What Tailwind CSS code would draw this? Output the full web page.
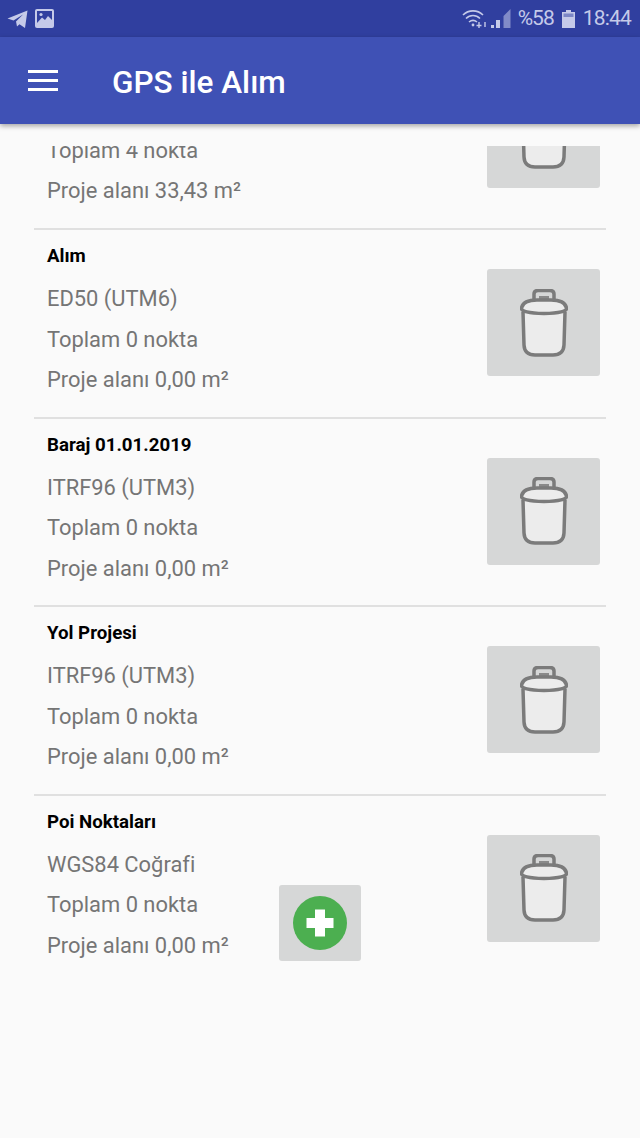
<!DOCTYPE html>
<html lang="tr">
<head>
  <meta charset="UTF-8" />
  <meta name="viewport" content="width=device-width, initial-scale=1.0"/>
  <title>GPS ile Alım</title>
  <script src="https://cdn.jsdelivr.net/npm/@tailwindcss/browser@4"></script>
</head>

<body class="bg-[#fafafa] font-['Roboto',sans-serif]">
<div class="relative w-[640px] h-[1138px] overflow-hidden bg-[#fafafa]">

  <!-- status bar -->
  <div class="h-[37px] bg-[#303f9f] flex items-center pl-[7px] pr-[9px] text-[#c5cae9]">
    <svg class="w-[21px] h-[20px]" viewBox="0 0 21 20" fill="currentColor"><path d="M0.5 9.5 L20.5 1.5 L18 19 L12.5 15.2 L10 17.5 L9 12.5 L16 5.5 L6.5 11.5 Z"/></svg>
    <svg class="w-[19px] h-[19px] ml-[7px]" viewBox="0 0 19 19"><rect width="19" height="19" rx="2" fill="currentColor"/><rect x="2" y="2" width="15" height="12" fill="#303f9f"/><circle cx="6" cy="5.5" r="1.6" fill="currentColor"/><path d="M2 14 L7 8.5 L10 11 L13 7 L17 11 V14 Z" fill="currentColor"/></svg>
    <div class="ml-auto flex items-center">
      <svg class="w-[25px] h-[20px]" viewBox="0 0 25 20" fill="none" stroke="currentColor" stroke-width="1.6"><path d="M1 6 C6.5 0.5 15.5 0.5 21 6"/><path d="M4 9.5 C8 5.5 14 5.5 18 9.5"/><path d="M7 13 C9.5 11 12.5 11 15 13"/><circle cx="11" cy="16" r="1.4" fill="currentColor" stroke="none"/><path d="M17 13 V19 M14.5 16.5 H19.5 M23 13 V18" stroke-width="1.4"/></svg>
      <svg class="w-[20px] h-[19px] ml-[4px]" viewBox="0 0 20 19" fill="currentColor"><path d="M0 16 H3 V19 H0 Z"/><path d="M5 11 H9 V19 H5 Z"/><path d="M12.5 7 L19.5 0 V19 H12.5 Z" fill-opacity="0.55"/></svg>
      <span class="ml-[7px] text-[21px] leading-none tracking-[-1px]">%58</span>
      <svg class="w-[13px] h-[18px] ml-[8px]" viewBox="0 0 13 18" fill="currentColor"><path d="M4 0 H9 V2 H13 V18 H0 V2 H4 Z"/><rect x="1.5" y="3.5" width="10" height="3.5" fill="#7c87c6"/></svg>
      <span class="ml-[8px] text-[21px] leading-none tracking-[-0.8px]">18:44</span>
    </div>
  </div>

  <!-- app bar -->
  <header class="h-[87px] bg-[#3f51b5] flex items-center shadow-[0_2px_5px_rgba(0,0,0,0.35)] relative z-10">
    <div class="ml-[28px] w-[30px] flex flex-col gap-[6px]">
      <div class="h-[3px] bg-white"></div>
      <div class="h-[3px] bg-white"></div>
      <div class="h-[3px] bg-white"></div>
    </div>
    <h1 class="ml-[54px] pt-[4px] text-[31.5px] font-medium text-white whitespace-nowrap">GPS ile Alım</h1>
  </header>

  <!-- project list, scrolled so that the first row is cut off -->
  <main class="mt-[22px] mx-[34px] h-[992px] overflow-hidden">

    <section class="h-[84px] border-b-2 border-[#e0e0e0] flex justify-between">
      <div class="pl-[13px] -mt-[15.5px]">
        <p class="text-[21.9px] leading-[40.5px] text-[#757575]">Toplam 4 nokta</p>
        <p class="text-[21.9px] leading-[40.5px] text-[#757575]">Proje alanı 33,43 m²</p>
      </div>
      <button class="-mt-[65px] mr-[6px] w-[113px] h-[107px] rounded-[3px] bg-[#d6d7d7] flex items-center justify-center">
        <svg class="w-[48px] h-[68px]" viewBox="0 0 48 68" fill="none" stroke="#7b7b7b" stroke-width="3.5"><path d="M14 12 V5 Q14 1.5 18 1.5 H30 Q34 1.5 34 5 V12" fill="#d6d7d7"/><path d="M19 9 H29" stroke-width="4" stroke="#8a8a8a"/><path d="M3 23 L4 56 Q4.500 66 15 66 H33 Q43.500 66 44 56 L45 23" fill="#ececec"/><path d="M1.5 19 Q3 11 17 11 H31 Q45 11 46.5 19 Q47 24 24 24.5 Q1 24 1.5 19 Z" fill="#ececec"/></svg>
      </button>
    </section>

    <section class="h-[188.5px] border-b-2 border-[#e0e0e0] flex justify-between">
      <div class="pl-[13px] pt-[13px]">
        <h2 class="text-[18.7px] leading-[26px] font-bold text-black">Alım</h2>
        <p class="mt-[10px] text-[21.9px] leading-[40.5px] text-[#757575]">ED50 (UTM6)</p>
        <p class="text-[21.9px] leading-[40.5px] text-[#757575]">Toplam 0 nokta</p>
        <p class="text-[21.9px] leading-[40.5px] text-[#757575]">Proje alanı 0,00 m²</p>
      </div>
      <button class="mt-[39px] mr-[6px] w-[113px] h-[107px] rounded-[3px] bg-[#d6d7d7] flex items-center justify-center">
        <svg class="w-[48px] h-[68px]" viewBox="0 0 48 68" fill="none" stroke="#7b7b7b" stroke-width="3.5"><path d="M14 12 V5 Q14 1.5 18 1.5 H30 Q34 1.5 34 5 V12" fill="#d6d7d7"/><path d="M19 9 H29" stroke-width="4" stroke="#8a8a8a"/><path d="M3 23 L4 56 Q4.500 66 15 66 H33 Q43.500 66 44 56 L45 23" fill="#ececec"/><path d="M1.5 19 Q3 11 17 11 H31 Q45 11 46.5 19 Q47 24 24 24.5 Q1 24 1.5 19 Z" fill="#ececec"/></svg>
      </button>
    </section>

    <section class="h-[188.5px] border-b-2 border-[#e0e0e0] flex justify-between">
      <div class="pl-[13px] pt-[13px]">
        <h2 class="text-[18.7px] leading-[26px] font-bold text-black">Baraj 01.01.2019</h2>
        <p class="mt-[10px] text-[21.9px] leading-[40.5px] text-[#757575]">ITRF96 (UTM3)</p>
        <p class="text-[21.9px] leading-[40.5px] text-[#757575]">Toplam 0 nokta</p>
        <p class="text-[21.9px] leading-[40.5px] text-[#757575]">Proje alanı 0,00 m²</p>
      </div>
      <button class="mt-[39px] mr-[6px] w-[113px] h-[107px] rounded-[3px] bg-[#d6d7d7] flex items-center justify-center">
        <svg class="w-[48px] h-[68px]" viewBox="0 0 48 68" fill="none" stroke="#7b7b7b" stroke-width="3.5"><path d="M14 12 V5 Q14 1.5 18 1.5 H30 Q34 1.5 34 5 V12" fill="#d6d7d7"/><path d="M19 9 H29" stroke-width="4" stroke="#8a8a8a"/><path d="M3 23 L4 56 Q4.500 66 15 66 H33 Q43.500 66 44 56 L45 23" fill="#ececec"/><path d="M1.5 19 Q3 11 17 11 H31 Q45 11 46.5 19 Q47 24 24 24.5 Q1 24 1.5 19 Z" fill="#ececec"/></svg>
      </button>
    </section>

    <section class="h-[188.5px] border-b-2 border-[#e0e0e0] flex justify-between">
      <div class="pl-[13px] pt-[13px]">
        <h2 class="text-[18.7px] leading-[26px] font-bold text-black">Yol Projesi</h2>
        <p class="mt-[10px] text-[21.9px] leading-[40.5px] text-[#757575]">ITRF96 (UTM3)</p>
        <p class="text-[21.9px] leading-[40.5px] text-[#757575]">Toplam 0 nokta</p>
        <p class="text-[21.9px] leading-[40.5px] text-[#757575]">Proje alanı 0,00 m²</p>
      </div>
      <button class="mt-[39px] mr-[6px] w-[113px] h-[107px] rounded-[3px] bg-[#d6d7d7] flex items-center justify-center">
        <svg class="w-[48px] h-[68px]" viewBox="0 0 48 68" fill="none" stroke="#7b7b7b" stroke-width="3.5"><path d="M14 12 V5 Q14 1.5 18 1.5 H30 Q34 1.5 34 5 V12" fill="#d6d7d7"/><path d="M19 9 H29" stroke-width="4" stroke="#8a8a8a"/><path d="M3 23 L4 56 Q4.500 66 15 66 H33 Q43.500 66 44 56 L45 23" fill="#ececec"/><path d="M1.5 19 Q3 11 17 11 H31 Q45 11 46.5 19 Q47 24 24 24.5 Q1 24 1.5 19 Z" fill="#ececec"/></svg>
      </button>
    </section>

    <section class="h-[188.5px] flex justify-between">
      <div class="pl-[13px] pt-[13px]">
        <h2 class="text-[18.7px] leading-[26px] font-bold text-black">Poi Noktaları</h2>
        <p class="mt-[10px] text-[21.9px] leading-[40.5px] text-[#757575]">WGS84 Coğrafi</p>
        <p class="text-[21.9px] leading-[40.5px] text-[#757575]">Toplam 0 nokta</p>
        <p class="text-[21.9px] leading-[40.5px] text-[#757575]">Proje alanı 0,00 m²</p>
      </div>
      <button class="mt-[39px] mr-[6px] w-[113px] h-[107px] rounded-[3px] bg-[#d6d7d7] flex items-center justify-center">
        <svg class="w-[48px] h-[68px]" viewBox="0 0 48 68" fill="none" stroke="#7b7b7b" stroke-width="3.5"><path d="M14 12 V5 Q14 1.5 18 1.5 H30 Q34 1.5 34 5 V12" fill="#d6d7d7"/><path d="M19 9 H29" stroke-width="4" stroke="#8a8a8a"/><path d="M3 23 L4 56 Q4.500 66 15 66 H33 Q43.500 66 44 56 L45 23" fill="#ececec"/><path d="M1.5 19 Q3 11 17 11 H31 Q45 11 46.5 19 Q47 24 24 24.5 Q1 24 1.5 19 Z" fill="#ececec"/></svg>
      </button>
    </section>
  </main>

  <!-- add button floats over the list -->
  <button class="absolute left-[279px] top-[885px] w-[82px] h-[76px] rounded-[3px] bg-[#d6d7d7] flex items-center justify-center">
    <svg class="w-[54px] h-[54px]" viewBox="0 0 54 54"><circle cx="27" cy="27" r="27" fill="#4caf50"/><path d="M22 13.5 H32 V22 H40.5 V32 H32 V40.5 H22 V32 H13.5 V22 H22 Z" fill="#fff"/></svg>
  </button>
</div>
</body>
</html>
